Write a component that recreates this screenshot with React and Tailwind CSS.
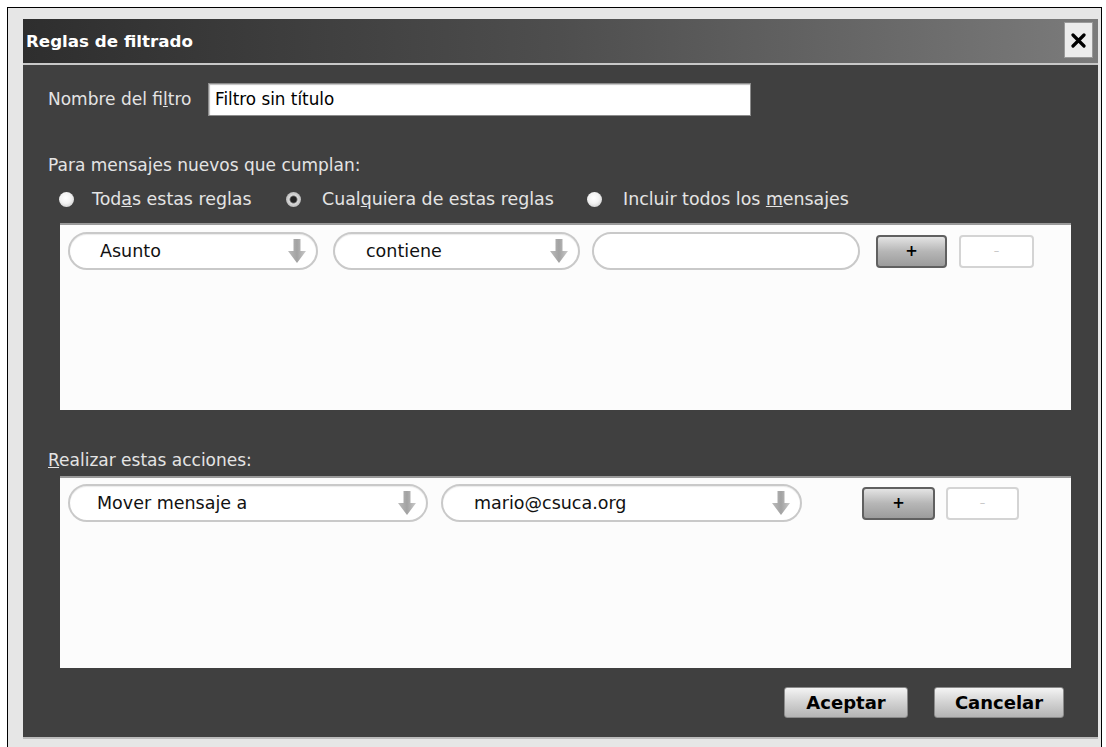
import React from "react";

const font = { fontFamily: '"DejaVu Sans", "Liberation Sans", sans-serif' };

function DownArrow() {
  return (
    <svg width="20" height="26" viewBox="0 0 20 26" className="shrink-0">
      <defs>
        <linearGradient id="arrowFill" x1="0" y1="0" x2="1" y2="0">
          <stop offset="0" stopColor="#bcbcbc" />
          <stop offset="0.5" stopColor="#a2a2a2" />
          <stop offset="1" stopColor="#cacaca" />
        </linearGradient>
      </defs>
      <path d="M6.5 1 H13.5 V13 H19 L10 25 L1 13 H6.5 Z" fill="url(#arrowFill)" />
    </svg>
  );
}

function Select({ label, width, pad }) {
  return (
    <div
      className={`flex h-[38px] items-center rounded-full border-2 border-[#c9c9c9] bg-white pr-[9px] shadow-[inset_0_1px_1px_rgba(0,0,0,0.08)] ${width} ${pad}`}
    >
      <span className="flex-1 text-[17.5px] text-[#111]">{label}</span>
      <DownArrow />
    </div>
  );
}

function PlusButton({ width }) {
  return (
    <div
      className={`flex h-[33px] items-center justify-center rounded-[4px] border-2 border-[#606060] bg-gradient-to-b from-[#e4e4e4] via-[#b6b6b6] to-[#9c9c9c] text-[15px] font-bold text-black ${width}`}
    >
      +
    </div>
  );
}

function MinusButton({ width }) {
  return (
    <div
      className={`flex h-[33px] items-center justify-center rounded-[4px] border-2 border-[#d4d4d4] bg-white text-[11px] text-[#bdbdbd] ${width}`}
    >
      –
    </div>
  );
}

function Radio({ checked }) {
  if (checked) {
    return (
      <span className="block h-[15px] w-[15px] shrink-0 rounded-full bg-[radial-gradient(circle,#222_0%,#222_26%,#dadada_42%,#9a9a9a_100%)]" />
    );
  }
  return (
    <span className="block h-[15px] w-[15px] shrink-0 rounded-full bg-[radial-gradient(circle_at_45%_40%,#ffffff_0%,#f2f2f2_45%,#bcbcbc_100%)]" />
  );
}

function DialogButton({ label, width }) {
  return (
    <div
      className={`flex h-[31px] items-center justify-center rounded-[3px] border border-[#8a8a8a] bg-gradient-to-b from-[#f4f4f4] via-[#d2d2d2] to-[#b4b4b4] text-[18px] font-bold text-black ${width}`}
    >
      {label}
    </div>
  );
}

export default function App() {
  return (
    <div className="h-[747px] w-[1106px] overflow-hidden bg-white pl-[7px] pr-[4px] pt-[7px]" style={font}>
      <div className="flex h-[740px] flex-col border-l border-r border-t border-black bg-[#e6e6e6] pl-[15px] pr-[3px] pt-[11px]">
        <div className="flex h-[720px] flex-col border-b-2 border-[#bdbdbd] bg-[#404040]">
          {/* title bar */}
          <div className="flex h-[44px] shrink-0 items-start justify-between bg-gradient-to-r from-[#2e2e2e] via-[#4e4e4e] to-[#7b7b7b] pl-[3px] pr-[5px]">
            <span className="mt-[10px] text-[16.7px] font-bold text-white">Reglas de filtrado</span>
            <div className="mt-[3px] flex h-[36px] w-[29px] items-center justify-center border border-[#9a9a9a] bg-[#ececec]">
              <svg width="15" height="15" viewBox="0 0 15 15">
                <path d="M2 2 L13 13 M13 2 L2 13" stroke="#000" strokeWidth="3.2" strokeLinecap="round" />
              </svg>
            </div>
          </div>
          <div className="h-[2px] shrink-0 bg-[#c8c8c8]" />

          {/* body */}
          <div className="flex flex-1 flex-col text-[#e4e4e4]">
            <div className="ml-[25px] mt-[18px] flex items-center">
              <span className="w-[160px] text-[17px]">
                Nombre del fi<u>l</u>tro
              </span>
              <div className="flex h-[33px] w-[543px] items-center border border-[#8c8c8c] bg-white pl-[6px] text-[16.8px] text-black shadow-[inset_1px_1px_1px_rgba(0,0,0,0.25)]">
                Filtro sin título
              </div>
            </div>

            <div className="ml-[25px] mt-[39px] h-[20px] text-[17px] leading-[20px]">Para mensajes nuevos que cumplan:</div>

            <div className="ml-[36px] mt-[12px] flex h-[24px] items-center whitespace-nowrap text-[17.4px]">
              <Radio />
              <span className="ml-[18px] w-[163px]">
                Tod<u>a</u>s estas reglas
              </span>
              <span className="ml-[31px]">
                <Radio checked />
              </span>
              <span className="ml-[21px] w-[231px]">
                Cual<u>q</u>uiera de estas reglas
              </span>
              <span className="ml-[34px]">
                <Radio />
              </span>
              <span className="ml-[21px]">
                Incluir todos los <u>m</u>ensajes
              </span>
            </div>

            {/* rules list */}
            <div className="ml-[37px] mr-[27px] mt-[12px] h-[187px] border-t-2 border-[#9a9a9a] bg-[#fcfcfc] pl-[8px] pt-[7px]">
              <div className="flex items-center">
                <Select label="Asunto" width="w-[250px]" pad="pl-[30px]" />
                <div className="ml-[15px]">
                  <Select label="contiene" width="w-[247px]" pad="pl-[31px]" />
                </div>
                <div className="ml-[12px] h-[38px] w-[268px] rounded-full border-2 border-[#c9c9c9] bg-white" />
                <div className="ml-[16px]">
                  <PlusButton width="w-[71px]" />
                </div>
                <div className="ml-[12px]">
                  <MinusButton width="w-[75px]" />
                </div>
              </div>
            </div>

            <div className="ml-[25px] mt-[40px] h-[20px] text-[17px] leading-[20px]">
              <u>R</u>ealizar estas acciones:
            </div>

            {/* actions list */}
            <div className="ml-[37px] mr-[27px] mt-[6px] h-[192px] border-t-2 border-[#9a9a9a] bg-[#fcfcfc] pl-[8px] pt-[6px]">
              <div className="flex items-center">
                <Select label="Mover mensaje a" width="w-[360px]" pad="pl-[27px]" />
                <div className="ml-[13px]">
                  <Select label="mario@csuca.org" width="w-[361px]" pad="pl-[31px]" />
                </div>
                <div className="ml-[60px]">
                  <PlusButton width="w-[73px]" />
                </div>
                <div className="ml-[11px]">
                  <MinusButton width="w-[73px]" />
                </div>
              </div>
            </div>

            <div className="mr-[34px] mt-[19px] flex justify-end gap-[26px]">
              <DialogButton label="Aceptar" width="w-[124px]" />
              <DialogButton label="Cancelar" width="w-[130px]" />
            </div>
          </div>
        </div>
      </div>
    </div>
  );
}
